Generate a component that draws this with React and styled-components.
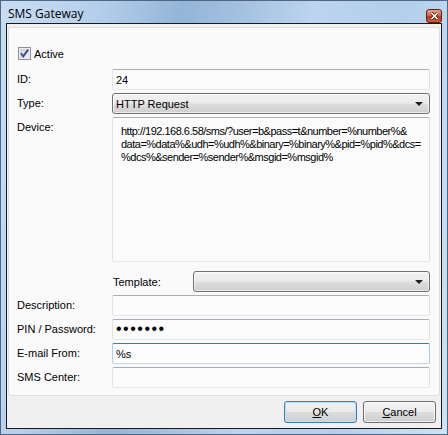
import React from 'react'
import styled, { createGlobalStyle, css } from 'styled-components'

const Global = createGlobalStyle`
  html, body {
    margin: 0;
    padding: 0;
    background: #fff;
  }
  * {
    box-sizing: border-box;
  }
`

const Window = styled.div`
  width: 448px;
  height: 435px;
  overflow: hidden;
  border: 1px solid #4f6784;
  padding: 0 5px 5px 5px;
  display: flex;
  flex-direction: column;
  font-family: 'Liberation Sans', Arial, sans-serif;
  font-size: 11px;
  color: #000;
  background: linear-gradient(
    100deg,
    #c8ddf2 0%,
    #b6d0eb 18%,
    #94b5d8 35%,
    #a2bfdf 45%,
    #bcd4ed 60%,
    #b4cfeb 78%,
    #cfe2f5 100%
  );
`

const TitleBar = styled.div`
  height: 22px;
  display: flex;
  align-items: center;
  justify-content: space-between;
  padding: 0 0 0 2px;
`

const Title = styled.span`
  font-size: 12px;
  font-family: 'Open Sans', 'Liberation Sans', sans-serif;
  margin-top: 3px;
`

const CloseButton = styled.div`
  width: 16px;
  height: 14px;
  margin-top: 8px;
  border: 1px solid #5a2418;
  border-radius: 3px;
  background: linear-gradient(#e6a08c 0%, #d26a52 45%, #b83a22 55%, #cf5a3c 100%);
  display: flex;
  align-items: center;
  justify-content: center;
`

const Client = styled.div`
  flex: 1;
  min-width: 0;
  border: 1px solid #1a1a1a;
  background: #f0f0f0;
  display: flex;
  flex-direction: column;
  padding: 3px 1px 2px 1px;
`

const Panel = styled.div`
  flex: 1;
  border: 1px solid #d9dee4;
  border-radius: 3px;
  background: #fafafa;
  padding: 19px 9px 0 8px;
`

const CheckRow = styled.label`
  display: flex;
  align-items: center;
  gap: 3px;
  height: 13px;
  margin-left: 1px;
  margin-bottom: 9px;
`

const Form = styled.div`
  display: grid;
  grid-template-columns: 95px minmax(0, 1fr);
  row-gap: 3px;
`

const Label = styled.div`
  align-self: ${(p) => (p.$top ? 'start' : 'center')};
  padding-top: ${(p) => (p.$top ? '4px' : '0')};
  line-height: 13px;
`

const fieldBorder = css`
  border: 1px solid;
  border-color: #abadb3 #dbdfe6 #e3e9ef #e2e3ea;
  border-radius: 2px;
  background: #fbfbfb;
`

const TextBox = styled.div`
  ${fieldBorder}
  height: 21px;
  display: flex;
  align-items: center;
  padding-left: 3px;
  white-space: nowrap;
  ${(p) =>
    p.$focused &&
    css`
      border-color: #3d7bad #a4c9e3 #b7d9ed #b5cfe7;
      background: #fdfdfd;
    `}
`

const Dots = styled.span`
  font-size: 16px;
  letter-spacing: 1.5px;
  line-height: 1;
  margin-top: -1px;
`

const TextArea = styled.div`
  ${fieldBorder}
  height: 145px;
  padding: 7px 4px 0 8px;
  line-height: 13px;
  letter-spacing: -0.5px;
  white-space: pre;
  overflow: hidden;
`

const Combo = styled.div`
  height: 21px;
  border: 1px solid #707070;
  border-radius: 3px;
  background: linear-gradient(#f2f2f2 0%, #ebebeb 48%, #dddddd 52%, #cfcfcf 100%);
  display: flex;
  align-items: center;
  justify-content: space-between;
  padding: 0 6px 0 3px;
  box-shadow: inset 0 0 0 1px rgba(255, 255, 255, 0.6);
`

const Arrow = styled.span`
  width: 0;
  height: 0;
  border-left: 4px solid transparent;
  border-right: 4px solid transparent;
  border-top: 4px solid #1e1e1e;
`

const TemplateRow = styled.div`
  grid-column: 2;
  display: flex;
  align-items: center;
  margin-top: 6px;
  & > ${Combo} {
    flex: 1;
  }
`

const TemplateLabel = styled.span`
  width: 81px;
  padding-left: 1px;
`

const ButtonBar = styled.div`
  display: flex;
  justify-content: flex-end;
  gap: 6px;
  padding: 5px 4px 0 0;
  height: 30px;
`

const Button = styled.button`
  width: 73px;
  height: 22px;
  font-family: inherit;
  font-size: 11px;
  color: #000;
  border-radius: 3px;
  border: 1px solid ${(p) => (p.$default ? '#3c7fb1' : '#707070')};
  background: linear-gradient(#f2f2f2 0%, #ebebeb 48%, #dddddd 52%, #cfcfcf 100%);
  box-shadow: inset 0 0 0 1px ${(p) => (p.$default ? '#b8e2f9' : 'rgba(255,255,255,0.7)')};
  padding: 0;
`

const Check = () => (
  <svg width="13" height="13" viewBox="0 0 13 13">
    <defs>
      <linearGradient id="cbg" x1="0" y1="0" x2="1" y2="1">
        <stop offset="0" stopColor="#cbcfd5" />
        <stop offset="1" stopColor="#f6f6f6" />
      </linearGradient>
    </defs>
    <rect x="0.5" y="0.5" width="12" height="12" fill="#fff" stroke="#8e8f8f" />
    <rect x="2" y="2" width="9" height="9" fill="url(#cbg)" stroke="#c6cbd2" strokeWidth="0.6" />
    <path d="M3 6.2 L5.2 9.3 L10.2 2.6" fill="none" stroke="#3b4d8f" strokeWidth="1.9" />
  </svg>
)

const CloseGlyph = () => (
  <svg width="9" height="8" viewBox="0 0 9 8">
    <path d="M1.5 1 L7.5 7 M7.5 1 L1.5 7" stroke="#4a1a10" strokeWidth="3" />
    <path d="M1.5 1 L7.5 7 M7.5 1 L1.5 7" stroke="#fff" strokeWidth="1.6" />
  </svg>
)

const deviceUrl =
  'http://192.168.6.58/sms/?user=b&pass=t&number=%number%&\n' +
  'data=%data%&udh=%udh%&binary=%binary%&pid=%pid%&dcs=\n' +
  '%dcs%&sender=%sender%&msgid=%msgid%'

const App = () => {
  return (
    <>
      <Global />
      <Window>
        <TitleBar>
          <Title>SMS Gateway</Title>
          <CloseButton>
            <CloseGlyph />
          </CloseButton>
        </TitleBar>
        <Client>
          <Panel>
            <CheckRow>
              <Check />
              Active
            </CheckRow>
            <Form>
              <Label>ID:</Label>
              <TextBox>24</TextBox>
              <Label>Type:</Label>
              <Combo>
                <span>HTTP Request</span>
                <Arrow />
              </Combo>
              <Label $top>Device:</Label>
              <TextArea>{deviceUrl}</TextArea>
              <TemplateRow>
                <TemplateLabel>Template:</TemplateLabel>
                <Combo>
                  <span />
                  <Arrow />
                </Combo>
              </TemplateRow>
              <Label>Description:</Label>
              <TextBox />
              <Label>PIN / Password:</Label>
              <TextBox>
                <Dots>•••••••</Dots>
              </TextBox>
              <Label>E-mail From:</Label>
              <TextBox $focused>%s</TextBox>
              <Label>SMS Center:</Label>
              <TextBox />
            </Form>
          </Panel>
          <ButtonBar>
            <Button $default>
              <u>O</u>K
            </Button>
            <Button>
              <u>C</u>ancel
            </Button>
          </ButtonBar>
        </Client>
      </Window>
    </>
  )
}

export default App
